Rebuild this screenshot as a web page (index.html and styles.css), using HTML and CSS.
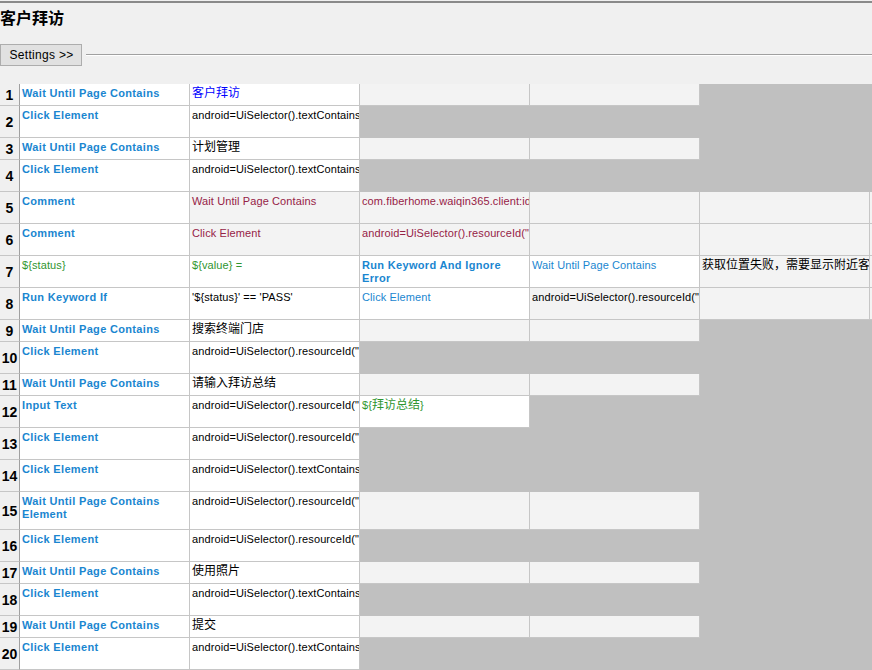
FILE: index.html
```html
<!DOCTYPE html>
<html>
<head>
<meta charset="utf-8">
<link rel="stylesheet" href="styles.css">
</head>
<body>
<div class="frame">
  <div class="title">客户拜访</div>
  <div class="toolbar">
    <button class="settings">Settings &gt;&gt;</button>
    <div class="sep"></div>
  </div>
  <div class="grid">
    <div class="row"><div class="c n">1</div><div class="c w kw">Wait Until Page Contains</div><div class="c w st"><span class="cj">客户拜访</span></div><div class="c g"></div><div class="c g"></div><div class="c d"></div><div class="c d e"></div></div>
    <div class="row t"><div class="c n">2</div><div class="c w kw">Click Element</div><div class="c w">android=UiSelector().textContains("<span class="cj">计划管理</span>")</div><div class="c d"></div><div class="c d"></div><div class="c d"></div><div class="c d e"></div></div>
    <div class="row"><div class="c n">3</div><div class="c w kw">Wait Until Page Contains</div><div class="c w"><span class="cj">计划管理</span></div><div class="c g"></div><div class="c g"></div><div class="c d"></div><div class="c d e"></div></div>
    <div class="row t"><div class="c n">4</div><div class="c w kw">Click Element</div><div class="c w">android=UiSelector().textContains("<span class="cj">客户拜访</span>")</div><div class="c d"></div><div class="c d"></div><div class="c d"></div><div class="c d e"></div></div>
    <div class="row t"><div class="c n">5</div><div class="c w kw">Comment</div><div class="c g cm">Wait Until Page Contains</div><div class="c g cm">com.fiberhome.waiqin365.client:id/tv_title</div><div class="c g"></div><div class="c g"></div><div class="c g e"></div></div>
    <div class="row t"><div class="c n">6</div><div class="c w kw">Comment</div><div class="c g cm">Click Element</div><div class="c g cm">android=UiSelector().resourceId("com.fiberhome")</div><div class="c g"></div><div class="c g"></div><div class="c g e"></div></div>
    <div class="row t"><div class="c n">7</div><div class="c w vr">${status}</div><div class="c w vr">${value} =</div><div class="c w kw">Run Keyword And Ignore Error</div><div class="c w lk">Wait Until Page Contains</div><div class="c g"><span class="cj">获取位置失败，需要显示附近客户</span></div><div class="c g e"></div></div>
    <div class="row t"><div class="c n">8</div><div class="c w kw">Run Keyword If</div><div class="c w">'${status}' == 'PASS'</div><div class="c w lk">Click Element</div><div class="c g">android=UiSelector().resourceId("com.fiberhome")</div><div class="c g"></div><div class="c g e"></div></div>
    <div class="row"><div class="c n">9</div><div class="c w kw">Wait Until Page Contains</div><div class="c w"><span class="cj">搜索终端门店</span></div><div class="c g"></div><div class="c g"></div><div class="c d"></div><div class="c d e"></div></div>
    <div class="row t"><div class="c n">10</div><div class="c w kw">Click Element</div><div class="c w">android=UiSelector().resourceId("com.fiberhome")</div><div class="c d"></div><div class="c d"></div><div class="c d"></div><div class="c d e"></div></div>
    <div class="row"><div class="c n">11</div><div class="c w kw">Wait Until Page Contains</div><div class="c w"><span class="cj">请输入拜访总结</span></div><div class="c g"></div><div class="c g"></div><div class="c d"></div><div class="c d e"></div></div>
    <div class="row t"><div class="c n">12</div><div class="c w kw">Input Text</div><div class="c w">android=UiSelector().resourceId("com.fiberhome")</div><div class="c w vr">${<span class="cj">拜访总结</span>}</div><div class="c d"></div><div class="c d"></div><div class="c d e"></div></div>
    <div class="row t"><div class="c n">13</div><div class="c w kw">Click Element</div><div class="c w">android=UiSelector().resourceId("com.fiberhome")</div><div class="c d"></div><div class="c d"></div><div class="c d"></div><div class="c d e"></div></div>
    <div class="row t"><div class="c n">14</div><div class="c w kw">Click Element</div><div class="c w">android=UiSelector().textContains("<span class="cj">提交</span>")</div><div class="c d"></div><div class="c d"></div><div class="c d"></div><div class="c d e"></div></div>
    <div class="row x"><div class="c n">15</div><div class="c w kw">Wait Until Page Contains Element</div><div class="c w">android=UiSelector().resourceId("com.fiberhome")</div><div class="c g"></div><div class="c g"></div><div class="c d"></div><div class="c d e"></div></div>
    <div class="row t"><div class="c n">16</div><div class="c w kw">Click Element</div><div class="c w">android=UiSelector().resourceId("com.fiberhome")</div><div class="c d"></div><div class="c d"></div><div class="c d"></div><div class="c d e"></div></div>
    <div class="row"><div class="c n">17</div><div class="c w kw">Wait Until Page Contains</div><div class="c w"><span class="cj">使用照片</span></div><div class="c g"></div><div class="c g"></div><div class="c d"></div><div class="c d e"></div></div>
    <div class="row t"><div class="c n">18</div><div class="c w kw">Click Element</div><div class="c w">android=UiSelector().textContains("<span class="cj">使用照片</span>")</div><div class="c d"></div><div class="c d"></div><div class="c d"></div><div class="c d e"></div></div>
    <div class="row"><div class="c n">19</div><div class="c w kw">Wait Until Page Contains</div><div class="c w"><span class="cj">提交</span></div><div class="c g"></div><div class="c g"></div><div class="c d"></div><div class="c d e"></div></div>
    <div class="row t"><div class="c n">20</div><div class="c w kw">Click Element</div><div class="c w">android=UiSelector().textContains("<span class="cj">提交</span>")</div><div class="c d"></div><div class="c d"></div><div class="c d"></div><div class="c d e"></div></div>
  </div>
</div>
</body>
</html>
```
FILE: styles.css
```css
html, body {
  margin: 0;
  padding: 0;
  width: 872px;
  height: 670px;
  overflow: hidden;
  background: #f0f0f0;
}
.frame {
  margin-top: 1px;
  border-top: 2px solid #8a8a8a;
  font-family: "Liberation Sans", "Noto Sans CJK SC", sans-serif;
}
.title {
  margin-top: 4px;
  height: 20px;
  font: bold 16px/20px "Noto Sans CJK SC", sans-serif;
  color: #000;
}
.toolbar {
  margin-top: 17px;
  height: 22px;
  display: flex;
  align-items: center;
}
.settings {
  width: 82px;
  height: 22px;
  margin: 0;
  padding: 0 0 0 1px;
  box-sizing: border-box;
  border: 1px solid #adadad;
  background: #e1e1e1;
  font: 12px/20px "Liberation Sans", sans-serif;
  letter-spacing: 0.3px;
  color: #000;
  text-align: center;
}
.sep {
  flex: 1;
  margin-left: 4px;
  height: 0;
  border-top: 1px solid #a0a0a0;
  border-bottom: 1px solid #ffffff;
}
.grid {
  margin-top: 18px;
}
.row {
  display: grid;
  grid-template-columns: 20px 170px 170px 170px 170px 170px 2px;
  height: 22px;
}
.row.t { height: 32px; }
.row.x { height: 38px; }
.c {
  box-sizing: border-box;
  border-right: 1px solid #c6c6c6;
  border-bottom: 1px solid #c6c6c6;
  overflow: hidden;
  white-space: nowrap;
  padding: 3px 2px 0 2px;
  font: 11px/13px "Liberation Sans", "Noto Sans CJK SC", sans-serif;
  letter-spacing: 0.1px;
  color: #000;
}
.c.e { border-right: none; }
.n {
  background: #f0f0f0;
  border-right-color: #a0a0a0;
  border-bottom-color: #c6c6c6;
  display: flex;
  align-items: center;
  justify-content: center;
  padding: 0;
  letter-spacing: 0;
  font: bold 14px/14px "Liberation Sans", sans-serif;
}
.w { background: #ffffff; }
.g { background: #f3f3f3; }
.d { background: #c0c0c0; border-color: #c0c0c0; }
.kw {
  font-weight: bold;
  color: #1a86d0;
  white-space: normal;
  letter-spacing: 0.33px;
}
.lk { color: #1a86d0; }
.cm { color: #962246; }
.vr { color: #2f952f; }
.st { color: #0000ff; }
.cj {
  font-family: "Noto Sans CJK SC", sans-serif;
  font-size: 12px;
  line-height: 0;
  letter-spacing: 0;
}
```
